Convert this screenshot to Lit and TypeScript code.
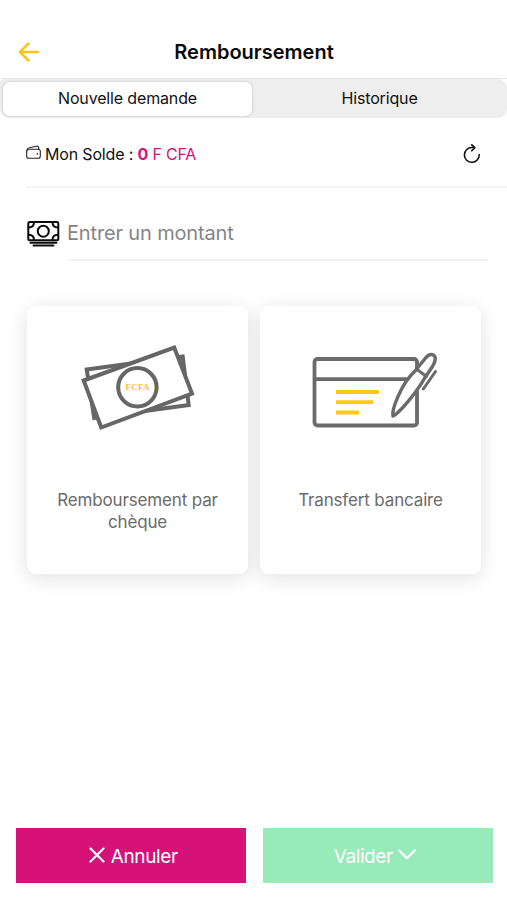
import { LitElement, html, css } from "lit";
import { customElement } from "lit/decorators.js";

@customElement("app-root")
export class AppRoot extends LitElement {
  static styles = css`
    :host {
      display: flex;
      flex-direction: column;
      box-sizing: border-box;
      height: 900px;
      background: #fff;
      color: #111;
      font-family: Inter, "Liberation Sans", sans-serif;
      overflow: hidden;
    }
    * { box-sizing: border-box; }
    svg { display: block; flex: none; fill: none; stroke-linecap: round; stroke-linejoin: round; }
    button { border: 0; padding: 0; background: none; font: inherit; color: inherit; white-space: nowrap; }
    header {
      display: grid;
      grid-template-columns: 60px 1fr 60px;
      align-items: center;
      height: 79px;
      padding-top: 26px;
      border-bottom: 1px solid #e6e6e6;
    }
    .back { padding-left: 18px; }
    h1 { margin: 0; padding-left: 1px; text-align: center; font-size: 20px; line-height: 24px; font-weight: 600; color: #0a0a0a; white-space: nowrap; }
    .segment {
      display: grid;
      grid-template-columns: 249px 1fr;
      height: 39px;
      padding: 3px 0 2px 3px;
      background: #eee;
      border-radius: 4px 9px 9px 9px;
      font-size: 16px;
    }
    .tab { display: block; padding-bottom: 3px; letter-spacing: -0.15px; }
    .tab.on { background: #fff; border-radius: 7px; box-shadow: 0 0 3px rgba(0, 0, 0, 0.22); }
    .balance {
      display: flex;
      align-items: center;
      height: 70px;
      margin-left: 26px;
      padding: 3px 26px 0 0;
      border-bottom: 2px solid #f4f4f4;
      font-size: 16px;
    }
    .wallet { margin-bottom: 3px; }
    .solde { flex: 1; margin-left: 4px; letter-spacing: -0.17px; }
    .amount { color: #d61279; }
    .field { display: flex; height: 73px; padding: 0 19px 0 27px; }
    .cash { margin-top: 32px; }
    .entry {
      flex: 1;
      margin-left: 8px;
      padding-top: 32px;
      border-bottom: 2px solid #f2f2f2;
      color: #858585;
      font-size: 20px;
      line-height: 27px;
      letter-spacing: -0.15px;
      text-indent: -1px;
    }
    .cards { display: grid; grid-template-columns: 221px 221px; gap: 12px; margin: 45px 0 0 27px; isolation: isolate; }
    .card {
      position: relative;
      height: 268px;
      border-radius: 9px;
      background: #fff;
      color: #6b6b6b;
      text-align: center;
      font-size: 17px;
      line-height: 22px;
      letter-spacing: -0.15px;
    }
    .card::before {
      content: "";
      position: absolute;
      inset: 0;
      z-index: -1;
      border-radius: 9px;
      box-shadow: 0 4px 20px rgba(0, 0, 0, 0.12);
    }
    .card svg { margin: 34px auto 0; }
    .card p { width: 190px; margin: 50px auto 0; }
    .fcfa { fill: #f8c51c; font: bold 9px "Liberation Serif", serif; letter-spacing: 0; }
    footer { display: grid; grid-template-columns: 230px 230px; gap: 17px; margin: auto 0 17px 15.5px; }
    .action {
      display: flex;
      align-items: center;
      justify-content: center;
      height: 55px;
      padding-top: 1px;
      color: #fff;
      font-size: 19px;
      letter-spacing: -0.4px;
      gap: 5.500px;
    }
    .action svg { margin-bottom: 2px; }
    .cancel { background: #d61279; padding-left: 6px; }
    .ok { background: #97ebb9; padding-right: 5px; }
  `;

  render() {
    return html`
      <header>
        <button class="back" aria-label="Retour">
          <svg width="22" height="20" viewBox="0 0 22 20" stroke="#f9c51b" stroke-width="2.5">
            <path d="M10.5 1.5 2 10l8.500 8.500M2.500 10H20" />
          </svg>
        </button>
        <h1>Remboursement</h1>
      </header>
      <nav class="segment">
        <button class="tab on">Nouvelle demande</button>
        <button class="tab">Historique</button>
      </nav>
      <section class="balance">
        <svg class="wallet" width="15" height="15" viewBox="0 0 15 15" stroke="#222" stroke-width="1.1">
          <rect x=".7" y="4.200" width="13.600" height="9" rx="2" />
          <path d="M.9 5.600C1 3.600 2 3 3.200 2.700L10.500 1.200c1.600-.3 2.300.4 2.300 2.800" />
          <circle cx="11.300" cy="8.900" r=".8" fill="#222" stroke="none" />
        </svg>
        <span class="solde">Mon Solde : <span class="amount"><b>0</b> F CFA</span></span>
        <svg width="20" height="20" viewBox="0 0 20 20" stroke="#111" stroke-width="1.600">
          <path d="M18.200 10.600A7.400 7.400 0 1 1 10.800 3.500h2.300" />
          <path d="M10.800.8 13.800 3.700 10.800 6.800" />
        </svg>
      </section>
      <section class="field">
        <svg class="cash" width="33" height="28" viewBox="0 0 33 28" stroke="#0b0b0b" stroke-width="2">
          <rect x="1.300" y="2" width="30" height="18.200" rx="1.500" />
          <circle cx="16.300" cy="11.200" r="5.500" />
          <path d="M1.500 7.500C5 7.500 7 5.500 7 2.300M31 7.500C27.500 7.500 25.500 5.500 25.500 2.300M1.500 14.700C5 14.700 7 16.700 7 20M31 14.700C27.500 14.700 25.500 16.700 25.500 20" />
          <path d="M3.500 22.700h26M6.500 25.600h20" stroke-width="2" />
        </svg>
        <div class="entry">Entrer un montant</div>
      </section>
      <main class="cards">
        <article class="card">
          <svg width="130" height="99" viewBox="73.300 340 130 99" stroke="#666" stroke-width="4">
            <g stroke-linejoin="miter">
              <path d="M87 369.500 183 356.500 189 405 94.500 418Z" />
              <path d="M84 380.500 174.500 347.500 192.300 393.500 101.500 427.500Z" fill="#fff" />
            </g>
            <circle cx="137.700" cy="387.300" r="19.200" />
            <text class="fcfa" x="125.800" y="389.800" textLength="24" stroke="none">FCFA</text>
          </svg>
          <p>Remboursement par chèque</p>
        </article>
        <article class="card">
          <svg width="130" height="99" viewBox="306 340 130 99" overflow="visible" stroke="#6b6b6b" stroke-width="3.800">
            <rect x="314.500" y="359" width="102.500" height="66.500" rx="3" />
            <path d="M315 379.200H415" stroke-linecap="butt" />
            <path d="M336 392h43M336 402.200h37M336 412.500h23" stroke="#fcca16" stroke-linecap="butt" />
            <path d="M393 416C391.500 411 400 385 415 371L426 357.500C429 354 433 353.500 434.800 356.500C436 359 434.500 363 432.500 366.500L425 377.500C415 395 398 414 393 416Z" fill="#fff" stroke-width="3.500" />
            <path d="M417 369.500 426.500 376.500" stroke-width="3" />
            <path d="M435.500 371.500 423.300 389" stroke-width="3" />
          </svg>
          <p>Transfert bancaire</p>
        </article>
      </main>
      <footer>
        <button class="action cancel">
          <svg width="16" height="16" viewBox="0 0 16 16" stroke="#fff" stroke-width="2.200"><path d="M1.500 1.500 14.500 14.500M14.500 1.500 1.500 14.500" /></svg>
          Annuler
        </button>
        <button class="action ok">
          Valider
          <svg width="18" height="12" viewBox="0 0 18 12" stroke="#fff" stroke-width="2.200"><path d="M1.200 1.500 9 9.200 16.800 1.500" /></svg>
        </button>
      </footer>
    `;
  }
}
